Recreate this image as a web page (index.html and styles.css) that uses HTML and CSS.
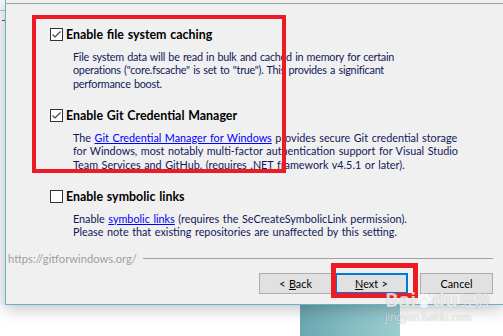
FILE: index.html
```html
<!DOCTYPE html>
<html>
<head>
  <title>Git Setup - Configuring extra options</title>
  <link rel="stylesheet" href="styles.css">
</head>
<body>
  <div class="screen">
    <div class="top">
      <div class="gutter">
        <span class="gutter-line"></span>
        <span class="gutter-dots"></span>
      </div>
      <div class="window">
        <div class="header"></div>

        <div class="options">
          <div class="option">
            <div class="option-title">
              <span class="check"><svg width="11" height="11" viewBox="0 0 11 11"><polyline points="1.5,5.5 4,8 9.5,2.5" /></svg></span>
              Enable file system caching
            </div>
            <p class="option-desc tight">File system data will be read in bulk and cached in memory for certain<br>operations ("core.fscache" is set to "true"). This provides a significant<br>performance boost.</p>
          </div>

          <div class="option">
            <div class="option-title">
              <span class="check"><svg width="11" height="11" viewBox="0 0 11 11"><polyline points="1.5,5.5 4,8 9.5,2.5" /></svg></span>
              Enable Git Credential Manager
            </div>
            <p class="option-desc">The <a href="#">Git Credential Manager for Windows</a> provides secure Git credential storage<br>for Windows, most notably multi-factor authentication support for Visual Studio<br>Team Services and GitHub. (requires .NET framework v4.5.1 or later).</p>
          </div>

          <div class="option">
            <div class="option-title">
              <span class="check"></span>
              Enable symbolic links
            </div>
            <p class="option-desc">Enable <a href="#">symbolic links</a> (requires the SeCreateSymbolicLink permission).<br>Please note that existing repositories are unaffected by this setting.</p>
          </div>
        </div>

        <div class="footer">
          <div class="brand">
            <span>https://gitforwindows.org/</span>
            <span class="rule"></span>
          </div>
          <div class="buttons">
            <button>&lt; <u>B</u>ack</button>
            <button class="default"><u>N</u>ext &gt;</button>
            <button class="cancel">Cancel</button>
          </div>
        </div>
      </div>
    </div>

    <div class="below">
      <div class="photo"></div>
    </div>

    <div class="mark mark-options"></div>
    <div class="mark mark-next"></div>

    <div class="watermark">
      <div class="wm-logo">Bai<svg width="14" height="15" viewBox="0 0 14 15"><ellipse cx="3" cy="5" rx="1.6" ry="2.2"/><ellipse cx="6" cy="2.5" rx="1.6" ry="2.2"/><ellipse cx="9.5" cy="2.8" rx="1.6" ry="2.2"/><ellipse cx="12" cy="6" rx="1.5" ry="2"/><path d="M7 7 C4 9 2 12 4 14 C6 15 8 15 10 14 C12 12 10 9 7 7 Z"/></svg>du<span class="wm-cn">经验</span></div>
      <div class="wm-url">jingyan.baidu.com</div>
    </div>
  </div>
</body>
</html>
```

FILE: styles.css
```css
body {
  margin: 0;
  width: 503px;
  height: 336px;
  overflow: hidden;
  background: #fff;
  font-family: Lato, "Noto Sans", sans-serif;
  font-size: 10px;
  word-spacing: 0.8px;
  color: #000;
}
.screen {
  position: relative;
  height: 336px;
}
.top {
  display: flex;
  height: 305px;
}
.gutter {
  width: 5px;
  background: #f6f7f8;
  display: flex;
  flex-direction: column;
}
.gutter-line {
  height: 1px;
  margin-top: 10px;
  background: #b8b8b8;
}
.gutter-dots {
  height: 1px;
  width: 3px;
  margin: 9px 0 0 2px;
  background: #b03030;
}
.window {
  flex: 1;
  display: flex;
  flex-direction: column;
  background: #f0f0f0;
  border-left: 1px solid #62b4cc;
  border-bottom: 1px solid #62b4cc;
  box-shadow: 0 5px 14px rgba(0,0,0,0.22);
  position: relative;
  z-index: 1;
}
.header {
  height: 3px;
  border-bottom: 1px solid #a0a0a0;
}
.options {
  padding: 22px 0 0 44px;
}
.option + .option {
  margin-top: 17px;
}
.option-title {
  display: flex;
  align-items: center;
  gap: 3px;
  height: 16px;
  font-weight: bold;
  font-size: 12.4px;
}
.check {
  width: 13px;
  height: 13px;
  box-sizing: border-box;
  border: 1px solid #333;
  background: #fff;
  display: flex;
}
.check polyline {
  fill: none;
  stroke: #444;
  stroke-width: 1.2;
}
.option-desc {
  margin: 7.5px 0 0 23px;
  line-height: 13.5px;
  font-size: 10.8px;
  color: #10185a;
  white-space: nowrap;
}
.option-desc.tight {
  letter-spacing: -0.25px;
}
.option-desc a {
  color: #0000ff;
}
.footer {
  margin-top: auto;
  padding: 0 10px 10px 0;
}
.brand {
  display: flex;
  align-items: center;
  height: 14px;
  padding-left: 2px;
  color: #a0a0a0;
  font-size: 11.2px;
}
.rule {
  flex: 1;
  height: 1px;
  margin-left: 6px;
  background: #a0a0a0;
}
.buttons {
  display: flex;
  justify-content: flex-end;
  margin-top: 8px;
}
.buttons button {
  width: 73px;
  height: 21px;
  box-sizing: border-box;
  padding: 0;
  border: 1px solid #adadad;
  background: #e1e1e1;
  font-family: inherit;
  font-size: 10.8px;
  word-spacing: 0.8px;
  color: #000;
}
.buttons .default {
  margin-left: 3px;
  border: 2px solid #0078d7;
}
.buttons .cancel {
  margin-left: 12px;
}
.below {
  padding-left: 300px;
  height: 31px;
}
.photo {
  width: 100px;
  height: 100%;
  background: linear-gradient(90deg, #6aa7b0, #89c0c6 60%, #9ccdd1);
}
.mark {
  position: absolute;
  z-index: 3;
  box-sizing: border-box;
  border-style: solid;
  border-color: #ed1c24;
}
.mark-options {
  left: 32px;
  top: 15px;
  width: 254px;
  height: 158px;
  border-width: 4px;
}
.mark-next {
  left: 331px;
  top: 263px;
  width: 87px;
  height: 35px;
  border-width: 5px;
}
.watermark {
  position: absolute;
  left: 385px;
  top: 289px;
  z-index: 4;
  color: rgba(255,255,255,0.75);
  text-shadow: 0 0 1px rgba(0,0,0,0.3);
  font-family: "Noto Sans", sans-serif;
  word-spacing: 0;
}
.wm-logo {
  display: flex;
  align-items: center;
  font-size: 20px;
  font-weight: bold;
  line-height: 22px;
}
.wm-logo svg {
  fill: rgba(255,255,255,0.75);
  margin: 0 1px;
}
.wm-cn {
  font-family: "Noto Sans CJK SC", sans-serif;
  font-size: 15px;
  margin-left: 2px;
}
.wm-url {
  font-size: 10px;
  line-height: 12px;
}
```
